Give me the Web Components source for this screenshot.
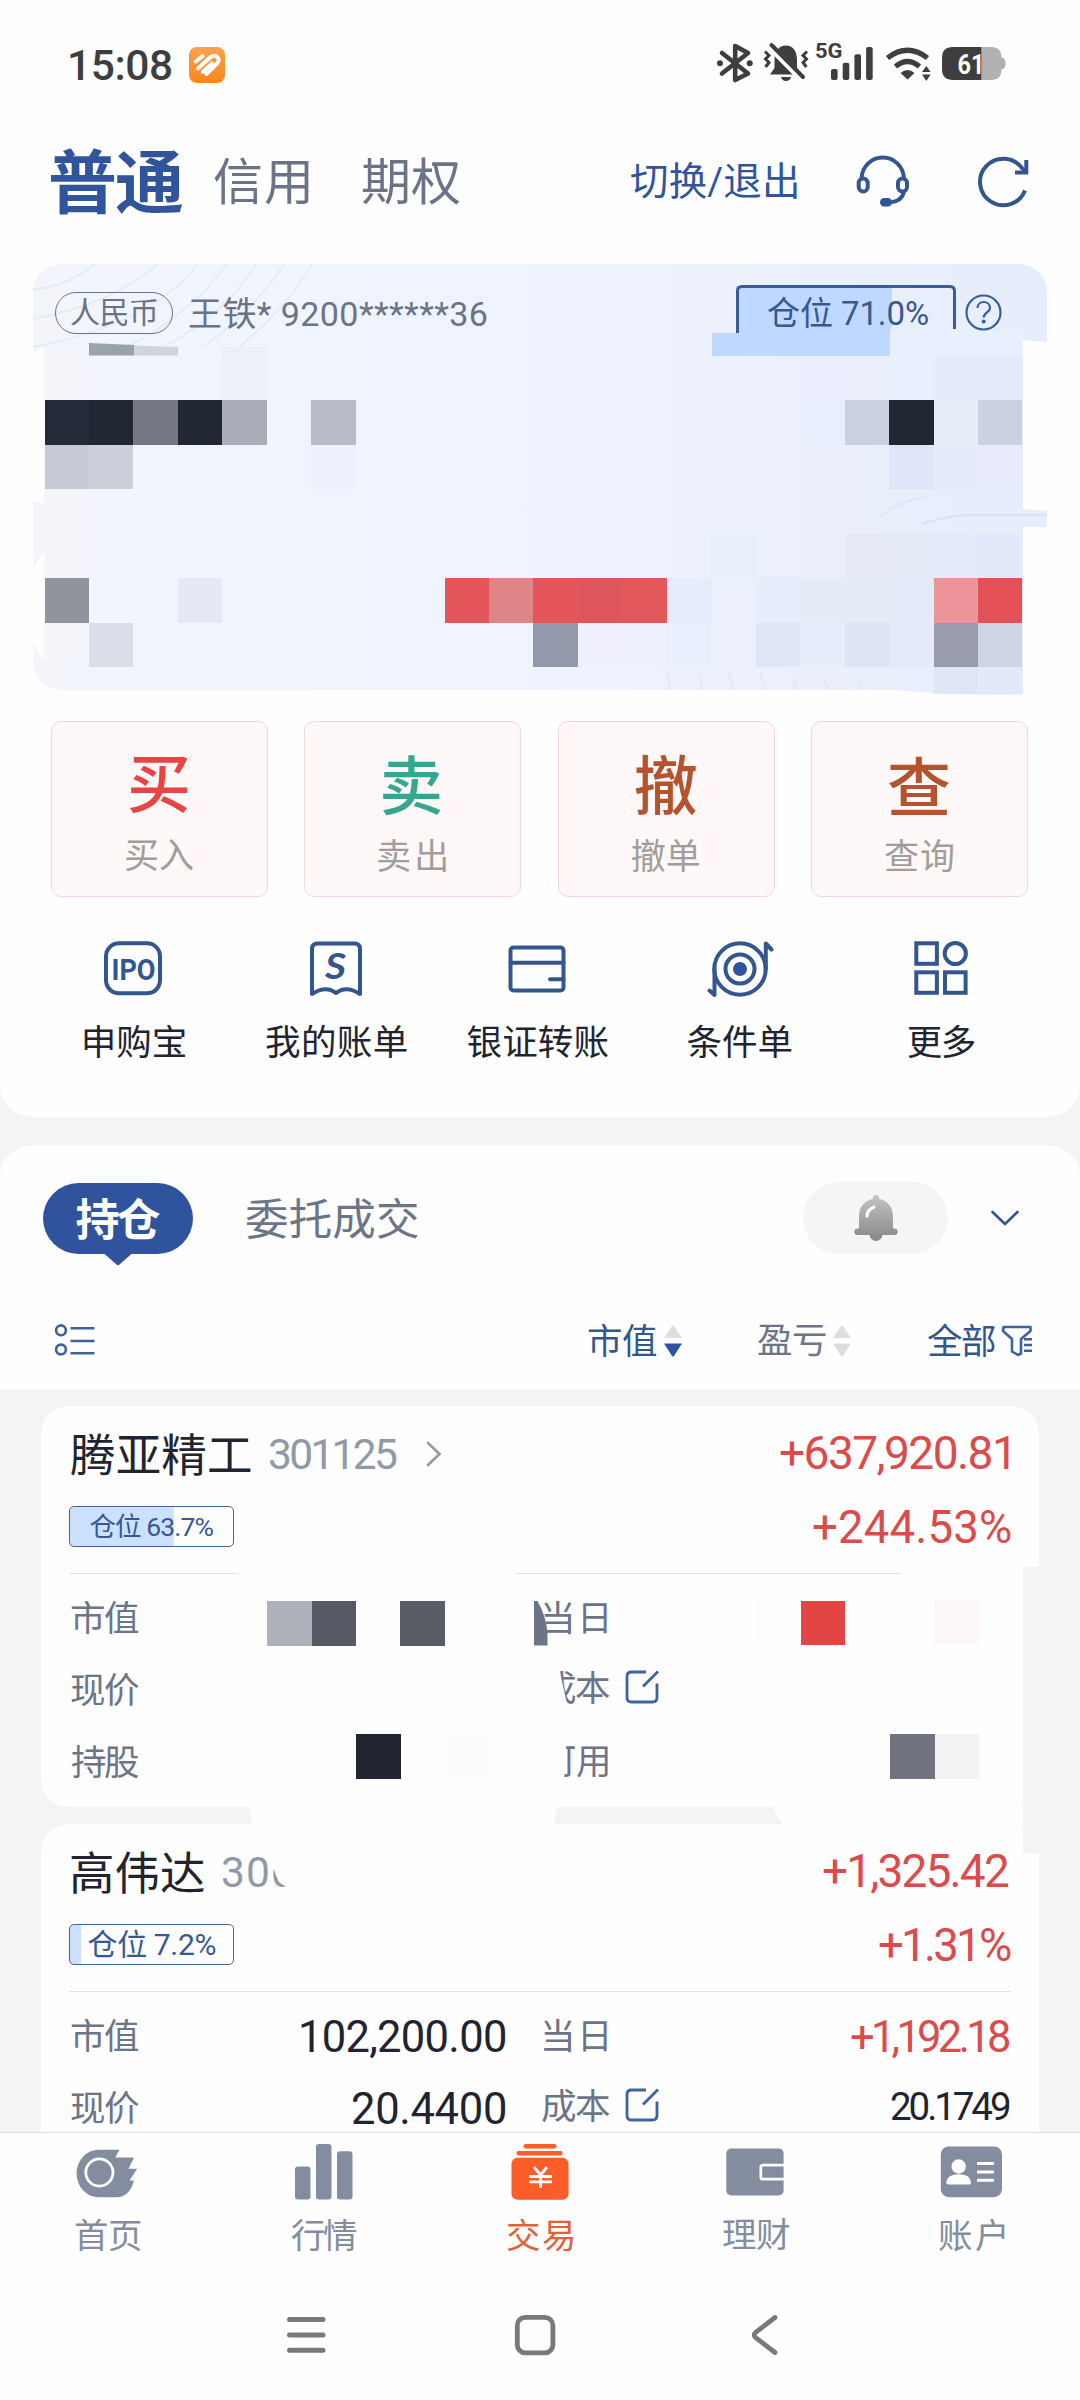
<!DOCTYPE html>
<html lang="zh-CN">
<head>
<meta charset="utf-8">
<title>交易</title>
<style>
html,body{margin:0;padding:0}
body{width:1080px;height:2400px;overflow:hidden;background:#f3f4f6;font-family:Roboto,"Noto Sans CJK SC",sans-serif}
</style>
</head>
<body>
<trade-app></trade-app>
<script>
const STACK = 'Roboto,"Noto Sans CJK SC",sans-serif';
const ctx = document.createElement('canvas').getContext('2d');

function define(name, css, html) {
  customElements.define(name, class extends HTMLElement {
    connectedCallback() {
      if (this.shadowRoot) return;
      const root = this.attachShadow({ mode: 'open' });
      const t = document.createElement('template');
      const get = (k, d = '') => this.getAttribute(k) ?? d;
      t.innerHTML = `<style>:host{display:block;box-sizing:border-box}*{box-sizing:border-box}svg{display:block;flex:none;overflow:visible}${css}</style>` +
        (typeof html === 'function' ? html(get) : html);
      root.appendChild(t.content.cloneNode(true));
    }
  });
}

/* A line of text whose box is its ink: w = ink width, s = font size, base = box ends at the baseline. */
customElements.define('fit-text', class extends HTMLElement {
  connectedCallback() {
    if (this.shadowRoot) return;
    const root = this.attachShadow({ mode: 'open' });
    const s = +this.getAttribute('s'), w = +this.getAttribute('w');
    const wt = this.getAttribute('wt') || '400';
    const text = this.textContent;
    ctx.font = `${wt} ${s}px ${STACK}`;
    const m = ctx.measureText(text);
    const probe = document.createElement('span');
    probe.style.cssText = `position:absolute;white-space:pre;font:${wt} ${s}px ${STACK};letter-spacing:.01px`;
    probe.textContent = text;
    document.body.appendChild(probe);
    const real = probe.getBoundingClientRect().width;
    probe.remove();
    const ink = m.actualBoundingBoxLeft + m.actualBoundingBoxRight + real - m.width;
    const ls = w && text.length > 1 ? (w - ink) / (text.length - 1) : 0;
    const L = Math.round(s * 1.2);
    const base = (L + m.fontBoundingBoxAscent - m.fontBoundingBoxDescent) / 2;
    const h = m.actualBoundingBoxAscent + (this.hasAttribute('base') ? 0 : m.actualBoundingBoxDescent);
    root.innerHTML = `<style>:host{display:flow-root;flex:none;width:${w || ink}px;height:${h}px;white-space:pre;
      font:${wt} ${s}px/${L}px ${STACK};letter-spacing:${ls}px}
      div{margin-top:${m.actualBoundingBoxAscent - base}px;margin-left:${m.actualBoundingBoxLeft}px}
      </style><div><slot></slot></div>`;
  }
});

define('status-bar', `
  :host{height:130px;display:flex;align-items:center;padding:0 74px 0 70px;color:#3e3e3e}
  .sp{flex:1}`, `
  <fit-text s="42.5" w="102" wt="500">15:08</fit-text>
  <svg style="margin-left:17px" width="36" height="36" viewBox="189 47 36 36">
    <defs><linearGradient id="o" x2="0" y2="1"><stop stop-color="#fba24c"/><stop offset="1" stop-color="#fc861d"/></linearGradient></defs>
    <rect x="189" y="47" width="36" height="36" rx="8" fill="url(#o)"/>
    <g fill="none" stroke="#fff" stroke-width="4" stroke-linecap="round" stroke-linejoin="round">
      <path d="M195.800 61.500L202.500 56"/><path d="M198 68.500L210.500 57C216 53.500 221 58.500 217 63.500L206.500 74"/><path d="M202.800 72L212 63.500"/></g>
  </svg>
  <div class="sp"></div>
  <svg width="290" height="44" viewBox="716 43 290 44" fill="#3e3e3e">
    <path d="M722 53L748 73.500L735.200 80V46L748 53L722 73.500" fill="none" stroke="#3e3e3e" stroke-width="4.600" stroke-linejoin="round" stroke-linecap="round"/>
    <circle cx="720" cy="63.200" r="3"/><circle cx="749.700" cy="63.200" r="3"/>
    <path d="M770 74.500L774.500 68V60C774.500 51 779 45.500 786 45.500S797 51 797 60V68L801 74.500Z"/>
    <path d="M781 77H791Q790 81 786 81T781 77Z"/>
    <path d="M769 47L800.500 79" stroke="#fefefe" stroke-width="5"/>
    <path d="M771.500 45L803 77" stroke="#3e3e3e" stroke-width="4" stroke-linecap="round"/>
    <path d="M765 51.500L769 55.500L765.500 59L769 62.500L765.500 67M807 51.500L803 55.500L806.500 59L803 62.500L806.500 67" fill="none" stroke="#3e3e3e" stroke-width="3"/>
    <text x="815" y="57.500" font-family="Roboto" font-weight="700" font-size="20" textLength="27.500" lengthAdjust="spacingAndGlyphs">5G</text>
    <rect x="831" y="69" width="6.600" height="11" rx="2"/><rect x="842.700" y="62.700" width="6.600" height="17.300" rx="2"/>
    <rect x="854.400" y="54.300" width="6.600" height="25.700" rx="2"/><rect x="866.100" y="47" width="6.600" height="33" rx="2"/>
    <path d="M887.500 58Q907.500 42.500 927.500 58M895.500 66.500Q907.500 56.500 919.500 66.500" fill="none" stroke="#3e3e3e" stroke-width="5.200"/>
    <path d="M900.500 73Q907.500 67 914.500 73L907.500 79.500Z"/>
    <path d="M922 72L926.300 66L930.600 72ZM922 74.500L926.300 81L930.600 74.500Z"/>
    <path d="M981.500 47H991Q1001.500 47 1001.500 57.500Q1005.500 58 1005.500 63.500T1001.500 69.500Q1001.500 80 991 80H981.500Z" fill="#b1b1b1"/>
    <path d="M981.500 47H953Q942 47 942 58V69Q942 80 953 80H981.500Z"/>
    <text x="957.500" y="73.500" font-family="Roboto" font-weight="700" font-size="28" fill="#fff" textLength="27" lengthAdjust="spacingAndGlyphs">61</text>
  </svg>`);

define('account-header', `
  :host{height:102px;display:flex;align-items:center;padding:0 50px 0 51px;color:#6a7388}
  .b{color:#31559a}.sp{flex:1}`, `
  <fit-text class="b" s="69" w="132" wt="700">普通</fit-text>
  <fit-text style="margin-left:31px" s="50" w="95">信用</fit-text>
  <fit-text style="margin-left:53px" s="50" w="98">期权</fit-text>
  <div class="sp"></div>
  <fit-text class="b" s="38.500" w="166">切换/退出</fit-text>
  <svg style="margin-left:57px" width="58" height="56" viewBox="854 153 58 56" fill="none" stroke="#34568f" stroke-width="4">
    <path d="M861.500 178A21.300 22 0 0 1 904 178"/><rect x="858.700" y="178.500" width="9" height="13" rx="4.500"/><rect x="898" y="178.500" width="9" height="13" rx="4.500"/>
    <path d="M904 192Q902 201 890 202.500"/><rect x="880" y="198" width="12" height="8.500" rx="4.200" fill="#2f549b" stroke="none"/></svg>
  <svg style="margin-left:64px" width="54" height="54" viewBox="976 155 54 54" fill="none" stroke="#34568f" stroke-width="4">
    <path d="M1025 191.500A23.300 23.300 0 1 1 1022 169L1025.500 173"/><path d="M1026.300 161V173.500H1015"/></svg>`);

/* Background of the asset card: tinted panel, contour lines and the privacy mosaic. */
const CELLS = [
 [4,0,'#edf1fa'],[17,0,'#eaedfb'],[18,0,'#eaeffb'],[19,0,'#e8effc'],[20,0,'#e4ebfb'],[21,0,'#e4ebfb'],
 [0,1,'#242b38'],[1,1,'#212633'],[2,1,'#747883'],[3,1,'#202733'],[4,1,'#a9adb8'],[6,1,'#b9bbc8'],
 [17,1,'#e8effc'],[18,1,'#ccd1df'],[19,1,'#212633'],[20,1,'#e7eefa'],[21,1,'#ccd1df'],
 [0,2,'#c7cad5'],[1,2,'#cacfd9'],[6,2,'#eff0fd'],[19,2,'#e0e6fa'],[20,2,'#e4ebfa'],[21,2,'#e8ebf9'],
 [15,4,'#e7effa'],[18,4,'#e6eaf6'],[19,4,'#e5ebf6'],[20,4,'#e4eaf9'],[21,4,'#e3e9fa'],
 [0,5,'#90949c'],[3,5,'#e6e9f4'],[9,5,'#e35558'],[10,5,'#de8588'],[11,5,'#e35558'],[12,5,'#de5659'],[13,5,'#e3585b'],
 [14,5,'#e5ecfb'],[16,5,'#e6edfb'],[17,5,'#e5ecf8'],[18,5,'#e5ecf8'],[19,5,'#e4eaf8'],[20,5,'#ed939a'],[21,5,'#e35056'],
 [1,6,'#d9dee9'],[11,6,'#9299ab'],[12,6,'#f0effc'],[13,6,'#eef0fc'],[14,6,'#e8f0fd'],[16,6,'#dfe6f7'],[17,6,'#e7eefb'],[18,6,'#dde5f5'],[19,6,'#e4eaf8'],
 [20,6,'#989cad'],[21,6,'#cfd4e3']];
const cell = (x, y, c, h = 44.5) => `<rect x="${44.5 + 44.45 * x}" y="${y}" width="44.500" height="${h}" fill="${c}"/>`;

define('asset-card', `
  :host{height:431px;display:grid;width:1080px}
  .bg{grid-area:1/1}
  .row{grid-area:1/1;display:flex;align-items:center;height:42px;margin-top:28px;padding-left:55px;color:#6a7388}
  .pill{width:118px;height:42px;border:1.5px solid #6a7388;border-radius:21px;display:flex;align-items:center;justify-content:center}
  .sp{flex:1}`, `
  <svg class="bg" width="1080" height="431" viewBox="0 264 1080 431" shape-rendering="auto">
    <defs><linearGradient id="g"><stop stop-color="#f4f5fa"/><stop offset=".06" stop-color="#f2f5fd"/><stop offset=".5" stop-color="#eef3fd"/><stop offset=".8" stop-color="#eaeffb"/><stop offset="1" stop-color="#e6edfb"/></linearGradient></defs>
    <path d="M33 292A28 28 0 0 1 61 264H1019A28 28 0 0 1 1047 292V342L1023 340V509L1047 511V527H1023V694.500Q960 696 895 690H61A28 28 0 0 1 33 662Z" fill="url(#g)"/>
    <g fill="none" stroke="#e3ecf5" stroke-width="1.800">
      <path d="M33 290Q70 285 95 264M33 319Q110 305 158 264M33 347Q150 325 198 264M126 347Q190 315 227 264M163 347Q225 315 256 264M203 347Q250 315 284 264M239 347Q285 310 312 264"/>
      <path d="M667 672L670 690M700 674L702 690M729 672L733 690M760 672L765 690M793 678L797 690M825 680L829 690M858 684L863 690" stroke="#e0e8f6"/></g>
    <g shape-rendering="crispEdges">
      <rect x="44.500" y="349" width="44.500" height="317" fill="#f4f5fa"/>
      ${cell(4,347,'#ebeff7',9)}
      ${CELLS.map(([x, y, c]) => cell(x, 355.6 + 44.5 * y, c)).join('')}
      ${cell(20,667,'#dfe4f7',27)}${cell(21,667,'#e3e9fa',27)}
      <rect x="712" y="333" width="178" height="23" fill="#bfd8ff"/><rect x="890" y="331" width="133" height="24.500" fill="#e9f0fd"/></g>
    <path d="M89 343L134 345V355.600H89Z" fill="#9aa3ac"/><path d="M134 345.500L178 347V355.600H134Z" fill="#d0d4df"/>
    <path d="M32 355Q36 350 44.500 348V505L32 500ZM32 571Q36 560 44.500 552V660Q36 652 32 640Z" fill="#fefefe"/>
    <path d="M922 524Q950 515 970 515H1047" fill="none" stroke="#dae3f5" stroke-width="2.500"/><path d="M880 516Q905 499 925 497" fill="none" stroke="#dee6f5" stroke-width="1.800"/>
    <rect x="736" y="286" width="156" height="43" fill="#bfd8ff"/><rect x="736" y="328" width="154" height="6" fill="#bfd8ff"/>
    <path d="M737.500 333V291Q737.500 286.500 742 286.500H950Q954.500 286.500 954.500 291V329" fill="none" stroke="#3a5d96" stroke-width="3"/>
  </svg>
  <div class="row">
    <div class="pill"><fit-text s="30" w="86">人民币</fit-text></div>
    <fit-text style="margin-left:16px" s="34" w="298">王铁* 9200******36</fit-text>
    <div class="sp"></div>
    <fit-text style="color:#365893;margin-bottom:2px" s="33" w="160">仓位 71.0%</fit-text>
    <svg style="margin:0 78px 0 37px" width="37" height="38" viewBox="965 294.500 37 38"><circle cx="983.500" cy="313" r="17" fill="none" stroke="#3a5d96" stroke-width="2.200"/>
      <path d="M977.500 308.500C977.500 300.500 990 300.500 990 308.500C990 313 983.700 313 983.700 318" fill="none" stroke="#3a5d96" stroke-width="2.200"/><circle cx="983.700" cy="322" r="2" fill="#3a5d96"/></svg>
  </div>`);

define('trade-button', `
  :host{width:217px;height:176px;border:1.500px solid #f2d9d8;border-radius:10px;background:#fef8f8;display:flex;flex-direction:column;align-items:center}
  .big{display:flex;align-items:center;height:60px;margin:33px 2px 0 0}
  .sm{display:flex;align-items:center;height:34px;margin:24px 1px 0 0;color:#a39c9b}`,
  g => `<div class="big" style="color:${g('color')}"><fit-text s="64" wt="500">${g('glyph')}</fit-text></div>
  <div class="sm"><fit-text s="35" w="68">${g('label')}</fit-text></div>`);

define('quick-action', `
  :host{flex:1;display:flex;flex-direction:column;align-items:center;color:#1f2430}
  .i{height:62px;display:flex;align-items:center}
  .t{height:36px;margin-top:24px;display:flex;align-items:center}`,
  g => `<div class="i"><slot></slot></div><div class="t"><fit-text s="35.500" w="${g('w')}">${g('label')}</fit-text></div>`);

define('trade-panel', `
  :host{background:#fefefe;height:1117px;border-radius:0 0 32px 32px}
  .btns{display:flex;justify-content:space-between;padding:0 52px 0 51px;margin-top:26px}
  .quick{display:flex;padding:0 38px 0 34px;margin-top:41px}`, `
  <status-bar></status-bar><account-header></account-header>
  <asset-card style="margin-top:32px"></asset-card>
  <div class="btns">
    <trade-button glyph="买" label="买入" color="#e84443"></trade-button><trade-button glyph="卖" label="卖出" color="#36a78f"></trade-button>
    <trade-button glyph="撤" label="撤单" color="#b5532f"></trade-button><trade-button glyph="查" label="查询" color="#b5532f"></trade-button>
  </div>
  <div class="quick">
    <quick-action label="申购宝" w="102"><svg style="margin-right:2px" width="62" height="58" viewBox="103 940 62 58" fill="none" stroke="#34568f" stroke-width="4">
      <rect x="106" y="943.300" width="54" height="50" rx="13"/><text x="111.500" y="979.500" fill="#34568f" stroke="none" font-family="Roboto" font-weight="700" font-size="29.500" textLength="44" lengthAdjust="spacingAndGlyphs">IPO</text></svg></quick-action>
    <quick-action label="我的账单" w="141"><svg width="56" height="58" viewBox="308 940 56 58" fill="none" stroke="#34568f" stroke-width="4" stroke-linejoin="round">
      <path d="M312 994V949Q312 943.500 317.500 943.500H354.500Q360 943.500 360 949V994Q346 985 336 993Q326 985 312 994Z"/>
      <text x="325" y="979" fill="#34568f" stroke="none" font-family="Lato" font-style="italic" font-weight="700" font-size="36" textLength="21" lengthAdjust="spacingAndGlyphs">S</text></svg></quick-action>
    <quick-action label="银证转账" w="141"><svg width="60" height="58" viewBox="508.500 939.500 60 58" fill="none" stroke="#34568f" stroke-width="4" stroke-linecap="round">
      <rect x="511" y="947" width="53" height="43" rx="3"/><path d="M511 962.300H564M550.500 978.700H564"/></svg></quick-action>
    <quick-action label="条件单" w="104"><svg width="70" height="60" viewBox="705 939 70 60" fill="none" stroke="#34568f" stroke-width="4" stroke-linejoin="round" stroke-linecap="round">
      <ellipse cx="740" cy="969" rx="25.700" ry="25.700"/><circle cx="740" cy="969" r="14.500"/><circle cx="740" cy="969" r="7" fill="#2f549b" stroke="none"/>
      <path d="M714.500 969V995L709.500 990.500M765.800 969V943.500L771.500 949.500"/></svg></quick-action>
    <quick-action label="更多" w="67"><svg width="58" height="58" viewBox="912 940 58 58" fill="none" stroke="#34568f" stroke-width="4">
      <rect x="916.300" y="943.300" width="20.600" height="20.500"/><circle cx="955.300" cy="953.500" r="10.600"/><rect x="916.300" y="972.300" width="20.600" height="20.500"/><rect x="945" y="972.300" width="20.600" height="20.500"/></svg></quick-action>
  </div>`);

const sortIcon = (a, b) => `<svg width="18" height="32" viewBox="0 0 18 32"><path d="M0 13L8 1Q9 0 10 1L18 13Z" fill="${a}"/><path d="M0 18.500H18L10 31Q9 32 8 31Z" fill="${b}"/></svg>`;
define('position-header', `
  :host{height:244px;background:#fefefe;border-radius:32px 32px 0 0}
  .tabs{display:flex;align-items:center;height:72px;padding:37px 60px 0 43px;box-sizing:content-box}
  .tabs svg.pill{grid-area:1/1}.cur{display:grid;width:150px;height:82px;margin-top:12px;color:#fff}
  .cur div{grid-area:1/1;display:flex;height:71px;align-items:center;justify-content:center}
  .bell{width:145px;height:72px;border-radius:36px;background:#f5f5f6;display:flex;align-items:center;justify-content:center}
  .sort{display:flex;align-items:center;height:34px;margin-top:70px;padding:0 47px 0 54px;color:#34568f}.sp{flex:1}`, `
  <div class="tabs">
    <div class="cur"><svg class="pill" width="150" height="82" fill="#2f549d"><rect width="150" height="71" rx="35.500"/><path d="M61 70.500H89L76.500 81.500Q75 82.500 73.500 81.500Z"/></svg>
      <div><fit-text s="44" w="85" wt="700">持仓</fit-text></div></div>
    <fit-text style="margin-left:53px;color:#6c7488" s="43.500" w="172">委托成交</fit-text>
    <div class="sp"></div>
    <div class="bell"><svg width="46" height="48" viewBox="852 1194 46 48"><defs><linearGradient id="b" x2="0" y2="1"><stop stop-color="#c4c4c4"/><stop offset="1" stop-color="#8f8f8f"/></linearGradient></defs>
      <circle cx="875" cy="1234.500" r="6.500" fill="#8b8b8b"/>
      <path d="M875 1195Q878 1195 878.500 1199C888 1201.500 892 1208 892 1217V1228.500H894A3.300 3.300 0 0 1 894 1235H856A3.300 3.300 0 0 1 856 1228.500H858V1217C858 1208 862 1201.500 871.500 1199Q872 1195 875 1195Z" fill="url(#b)"/>
      <path d="M866 1216Q866 1210 873 1207" fill="none" stroke="#fff" stroke-width="3" stroke-linecap="round"/></svg></div>
    <svg style="margin-left:42px" width="30" height="18" viewBox="0 0 30 18" fill="none" stroke="#34568f" stroke-width="2.600" stroke-linecap="round" stroke-linejoin="round"><path d="M2.500 3L15 15L27.500 3"/></svg>
  </div>
  <div class="sort">
    <svg width="42" height="36" viewBox="54 1324 42 36" fill="none" stroke="#3f629b" stroke-width="2.600"><circle cx="61" cy="1331.300" r="4.900"/><circle cx="61" cy="1350.500" r="4.900"/><path d="M70.500 1329.300H94.500M70.500 1342H94.500M70.500 1354.300H94.500"/></svg>
    <div class="sp"></div>
    <fit-text s="35.500" w="69">市值</fit-text><span style="margin-left:7px">${sortIcon('#dcdee1','#2f549d')}</span>
    <fit-text style="margin-left:76px;color:#6c7488" s="35.500" w="68">盈亏</fit-text><span style="margin-left:7px">${sortIcon('#dcdee1','#dcdee1')}</span>
    <fit-text style="margin-left:76px" s="35.500" w="68">全部</fit-text>
    <svg style="margin-left:6px" width="32" height="32" viewBox="1001.500 1325 32 32" fill="none" stroke="#3f629b" stroke-width="2.600" stroke-linejoin="round"><path d="M1004 1327H1031V1331L1021.500 1339V1353.500L1018.500 1355L1012.500 1351.500V1339L1003.500 1331Z"/><path d="M1024.500 1339.300H1032.500M1024.500 1345H1032.500M1024.500 1350.700H1032.500"/></svg>
  </div>`);

define('ratio-badge', `
  :host{width:165px;height:41px;border:1.500px solid #44649a;border-radius:5px;display:flex;align-items:center;justify-content:center;color:#365893;
   background:linear-gradient(#cce0ff,#cce0ff) 0 0/var(--fill) 100% no-repeat}`,
  g => `<style>:host{--fill:${g('fill')}}</style><fit-text s="${g('s')}" w="${g('w')}">${g('text')}</fit-text>`);

define('stock-card', `
  :host{width:998px;height:401px;margin:0 0 17px 41px;background:#fefefe;border-radius:28px}
  :host([partial]){height:308px;margin-bottom:0;border-radius:28px 28px 0 0}
  .h{display:flex;align-items:center;padding:0 30px 0 30px;height:96px}.h2{height:48px;padding:0 28px}
  .n{color:#1f2430}.c{color:#9299a6;margin-left:18px}.r{color:#db4b4b}.h:not(.h2) .r{margin-bottom:3px}.h2 .r{margin-top:1px}.sp{flex:1}
  hr{border:0;height:1px;background:#dfe1e5;margin:23px 28px 8px}
  .grid{display:grid;grid-template-columns:434px 468px;column-gap:37px;grid-auto-rows:72px;padding-left:30px}`,
  g => `<div class="h"><fit-text class="n" s="45.500" w="${g('nw')}">${g('name')}</fit-text><fit-text class="c" base s="42.500" w="${g('cw')}">${g('code')}</fit-text>
    ${g('arrow') ? '<svg style="margin-left:28px" width="17" height="28" fill="none" stroke="#9299a6" stroke-width="2.600" stroke-linecap="round"><path d="M3 3L14.500 14L3 25"/></svg>' : ''}
    <div class="sp"></div><fit-text class="r" base s="46" w="${g('pw')}">${g('profit')}</fit-text></div>
  <div class="h h2"><ratio-badge fill="${g('fill')}" s="${g('bs')}" w="${g('bw')}" text="${g('badge')}"></ratio-badge><div class="sp"></div><fit-text class="r" s="45.500" w="${g('rw')}">${g('rate')}</fit-text></div>
  <hr><div class="grid"><slot></slot></div>`);

define('stock-field', `
  :host{display:flex;align-items:center;color:#6c7488}.sp{flex:1}svg{margin-left:15px}.up{display:flex;padding-bottom:5px}.up~fit-text{margin-bottom:4px}`,
  g => `<div class="${g('edit') ? 'up' : ''}" style="margin-left:${g('ml', '0')}px"><fit-text s="35.500" w="${g('lw', '68')}">${g('label')}</fit-text>
  ${g('edit') ? '<svg width="34" height="34" viewBox="625.500 1670.500 34 34" fill="none" stroke="#41639c" stroke-width="2.800"><path d="M646.500 1672.500H632Q627.500 1672.500 627.500 1677V1698Q627.500 1702.500 632 1702.500H653Q657.500 1702.500 657.500 1698V1684"/><path d="M643.500 1687L658.500 1672"/></svg>' : ''}</div>
  <div class="sp"></div>${g('value') ? `<fit-text base style="color:${g('color', '#1f2430')}" s="${g('s', '43.500')}" w="${g('w')}">${g('value')}</fit-text>` : ''}`);

/* Privacy overlay painted above the list. */
define('redaction-layer', `:host{position:absolute;left:0;top:0}`, `
  <svg width="1080" height="743" viewBox="0 1389 1080 743">
    <g fill="#fefefe"><rect x="238" y="1571" width="278" height="5"/><rect x="901" y="1571" width="122" height="5"/>
      <path d="M250 1806Q250.500 1816 252 1825H553L558 1806Z"/><path d="M773 1806Q777 1817 784 1825H1023V1806Z"/>
      <path d="M541 1668H559L567.500 1706H541Z"/><path d="M541 1742H566.500L564 1782H541Z"/>
      <path d="M270 1838H302V1900H285.500L285 1886Q278 1883 274 1870L270 1868Z"/></g>
    <rect x="1023" y="1567" width="17" height="286" fill="#f3f4f6"/>
    <g shape-rendering="crispEdges"><rect x="267" y="1601" width="44.500" height="44.500" fill="#aeb1ba"/><rect x="311.500" y="1601" width="44.500" height="44.500" fill="#565a64"/><rect x="400" y="1601" width="45" height="44.500" fill="#585c65"/>
      <rect x="801" y="1601" width="44" height="44" fill="#e34545"/><rect x="756" y="1601" width="45" height="44" fill="#fefdfd"/><rect x="934" y="1601" width="45" height="44" fill="#fef7f7"/>
      <rect x="356" y="1734" width="44.500" height="44.500" fill="#212530"/><rect x="445" y="1734" width="44.500" height="44.500" fill="#fbfdfc"/><rect x="890" y="1734" width="44.500" height="44.500" fill="#71747e"/><rect x="934.500" y="1734" width="44.500" height="44.500" fill="#f2f2f5"/></g>
    <path d="M534 1601H537.500Q546 1616 547.500 1632V1645.500H534Z" fill="#6a7588"/>
  </svg>`);

define('position-list', `:host{position:relative;height:743px;padding-top:17px;background:#f3f4f6}`, `
  <stock-card name="腾亚精工" nw="180" code="301125" cw="128" arrow="1" profit="+637,920.81" pw="229" fill="63.700%" bs="26.500" bw="124" badge="仓位 63.7%" rate="+244.53%" rw="198">
    <stock-field label="市值"></stock-field><stock-field label="当日" ml="2" lw="63"></stock-field>
    <stock-field label="现价"></stock-field><stock-field label="成本" edit="1"></stock-field>
    <stock-field label="持股"></stock-field><stock-field label="可用" lw="66"></stock-field>
  </stock-card>
  <stock-card partial name="高伟达" nw="133" code="300" cw="71" profit="+1,325.42" pw="186" fill="7%" bs="30" bw="128" badge="仓位 7.2%" rate="+1.31%" rw="132">
    <stock-field label="市值" value="102,200.00" w="204"></stock-field><stock-field label="当日" ml="2" lw="63" value="+1,192.18" w="159" color="#db4b4b"></stock-field>
    <stock-field label="现价" value="20.4400" w="152"></stock-field><stock-field label="成本" edit="1" value="20.1749" s="38.500" w="119"></stock-field>
  </stock-card>
  <redaction-layer></redaction-layer>`);

define('tab-item', `
  :host{width:216px;display:flex;flex-direction:column;align-items:center;color:#848da0}
  :host([active]){color:#e2603a}
  .i{height:58px;display:flex;align-items:center}.t{height:34px;margin-top:17px;display:flex;align-items:center}`,
  g => `<div class="i"><slot></slot></div><div class="t"><fit-text s="34.500" w="66">${g('label')}</fit-text></div>`);

define('tab-bar', `:host{height:148px;border-top:1px solid #dcdfe3;background:#fefefe;display:flex;padding-top:10px}`, `
  <tab-item label="首页"><svg width="62" height="58" viewBox="77.500 2143.500 62 58" fill="#848da0"><path d="M120 2150.300L115.700 2158H134.600L129 2169.300H137.700L130 2181H134.500Q130 2197.700 117 2197.700H99A22 23.700 0 0 1 99 2150.300Z"/><circle cx="99.900" cy="2173" r="13.600" fill="none" stroke="#fff" stroke-width="2.800"/></svg></tab-item>
  <tab-item label="行情"><svg width="58" height="58" viewBox="295.500 2143.500 58 58" fill="#848da0"><rect x="295.500" y="2167" width="15.500" height="33" rx="3"/><rect x="316.500" y="2144.500" width="15.500" height="55.500" rx="3"/><rect x="337.500" y="2151.700" width="15.500" height="48.300" rx="3"/></svg></tab-item>
  <tab-item label="交易" active><svg width="58" height="58" viewBox="511.500 2143.500 58 58" fill="#fe5c28"><rect x="524" y="2144.500" width="33" height="4.600" rx="2"/><rect x="517" y="2151.500" width="46" height="4.600" rx="2"/><rect x="512" y="2158.300" width="57" height="41.900" rx="6"/>
    <path d="M534.500 2167.500L541 2175.500L547.500 2167.500M541 2175.500V2188.500M529.500 2177H552.500M529.500 2182.300H552.500" fill="none" stroke="#fff" stroke-width="2.800"/></svg></tab-item>
  <tab-item label="理财"><svg width="58" height="58" viewBox="727 2143.500 58 58" fill="#848da0"><rect x="726.300" y="2149" width="57.300" height="47" rx="5"/><path d="M785 2165.700H763Q760.800 2165.700 760.800 2168V2177.500Q760.800 2179.700 763 2179.700H785" fill="none" stroke="#fff" stroke-width="2.700"/></svg></tab-item>
  <tab-item label="账户"><svg width="62" height="58" viewBox="941 2143.500 62 58" fill="#848da0"><rect x="940.800" y="2147" width="61.200" height="50.700" rx="8"/><g fill="#fff"><circle cx="958.700" cy="2167" r="7.200"/><path d="M946.300 2183Q947 2174.700 958.700 2174.700T971 2183Q971 2185 969 2185H948.500Q946.300 2185 946.300 2183Z"/></g><path d="M977 2164H994M977 2172.400H994M977 2180.800H994" stroke="#fff" stroke-width="3"/></svg></tab-item>`);

define('nav-keys', `:host{height:120px;background:#fefefe;display:flex;align-items:center;padding:0 0 10px 284px}`, `
  <svg width="44" height="44" viewBox="284 2313 44 44" stroke="#797979" stroke-width="5" stroke-linecap="round"><path d="M289.500 2319.500H323M289.500 2335H323M289.500 2350.300H323"/></svg>
  <svg style="margin-left:185px" width="44" height="44" viewBox="513 2313 44 44" fill="none" stroke="#797979" stroke-width="4.800"><rect x="517.300" y="2317.300" width="35.600" height="35.600" rx="8"/></svg>
  <svg style="margin-left:193px" width="30" height="44" viewBox="750 2313 30 44" fill="none" stroke="#797979" stroke-width="4.800" stroke-linecap="round"><path d="M775 2317.500L756 2332Q752.500 2335 756 2338L775 2352.500"/></svg>`);

define('trade-app', `:host{width:1080px;height:2400px}`, `
  <trade-panel></trade-panel><position-header style="margin-top:28px"></position-header><position-list></position-list><tab-bar></tab-bar><nav-keys></nav-keys>`);
</script>
</body>
</html>
